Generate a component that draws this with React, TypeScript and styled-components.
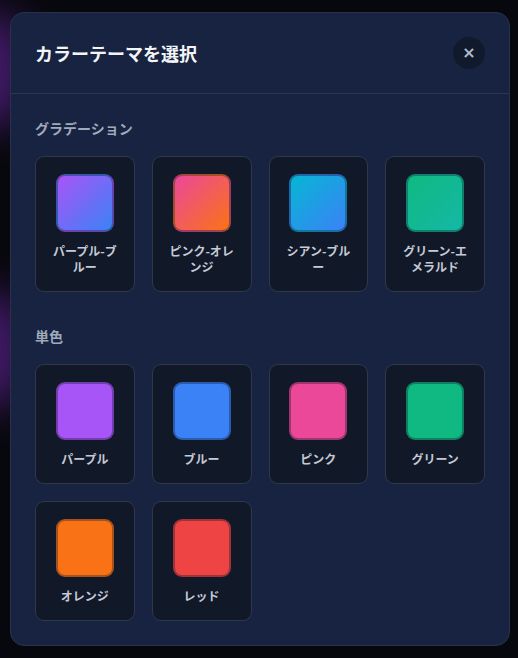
import React from 'react'
import styled, { createGlobalStyle } from 'styled-components'

const GlobalStyle = createGlobalStyle`
  html, body {
    margin: 0;
    padding: 0;
    background: #07080d;
    font-family: 'Noto Sans CJK JP', 'Noto Sans', sans-serif;
  }
`

interface Theme {
  name: string
  fill: string
}

const gradients: Theme[] = [
  { name: 'パープル-ブルー', fill: 'linear-gradient(135deg, #a855f7, #3b82f6)' },
  { name: 'ピンク-オレンジ', fill: 'linear-gradient(135deg, #ec4899, #f97316)' },
  { name: 'シアン-ブルー', fill: 'linear-gradient(135deg, #06b6d4, #3b82f6)' },
  { name: 'グリーン-エメラルド', fill: 'linear-gradient(135deg, #10b981, #14b8a6)' },
]

const solids: Theme[] = [
  { name: 'パープル', fill: '#a855f7' },
  { name: 'ブルー', fill: '#3b82f6' },
  { name: 'ピンク', fill: '#ec4899' },
  { name: 'グリーン', fill: '#10b981' },
  { name: 'オレンジ', fill: '#f97316' },
  { name: 'レッド', fill: '#ef4444' },
]

const ThemeGrid: React.FC<{ items: Theme[] }> = ({ items }) => (
  <Grid>
    {items.map((t) => (
      <Card key={t.name} type='button'>
        <Swatch $fill={t.fill} />
        <Label>{t.name}</Label>
      </Card>
    ))}
  </Grid>
)

const App: React.FC = () => {
  return (
    <Page>
      <GlobalStyle />
      <Glow $top={10} />
      <Glow $top={290} />
      <Modal>
        <Header>
          <Title>カラーテーマを選択</Title>
          <CloseButton type='button' aria-label='閉じる'>
            ×
          </CloseButton>
        </Header>
        <Body>
          <Section>
            <SectionTitle>グラデーション</SectionTitle>
            <ThemeGrid items={gradients} />
          </Section>
          <Section>
            <SectionTitle>単色</SectionTitle>
            <ThemeGrid items={solids} />
          </Section>
        </Body>
      </Modal>
    </Page>
  )
}

const Page = styled.div`
  position: relative;
  width: 518px;
  height: 658px;
  overflow: hidden;
  padding: 12px 0 0 10px;
  box-sizing: border-box;
  background: #07080d;
`

const Glow = styled.div<{ $top: number }>`
  position: absolute;
  left: -50px;
  top: ${(p) => p.$top}px;
  width: 80px;
  height: 120px;
  border-radius: 50%;
  background: #7a2bbf;
  opacity: 0.5;
  filter: blur(20px);
`

const Modal = styled.div`
  position: relative;
  width: 500px;
  box-sizing: border-box;
  background: #172341;
  border: 1px solid #28324c;
  border-radius: 14px;
`

const Header = styled.div`
  display: flex;
  align-items: center;
  justify-content: space-between;
  padding: 24px;
  border-bottom: 1px solid #2a3551;
`

const Title = styled.h2`
  margin: 0;
  font-size: 18px;
  line-height: 28px;
  font-weight: 700;
  color: #f3f4f6;
`

const CloseButton = styled.button`
  width: 32px;
  height: 32px;
  border: none;
  border-radius: 50%;
  background: #111a2c;
  color: #b4bccb;
  font-size: 16px;
  font-weight: 700;
  line-height: 32px;
  padding: 0;
  font-family: 'DejaVu Sans', sans-serif;
  cursor: pointer;
`

const Body = styled.div`
  padding: 24px 24px 24px 24px;
  display: flex;
  flex-direction: column;
  gap: 34px;
`

const Section = styled.section`
  display: flex;
  flex-direction: column;
  gap: 18px;
`

const SectionTitle = styled.h3`
  margin: 0;
  font-size: 14px;
  line-height: 20px;
  font-weight: 700;
  color: #a0aabb;
`

const Grid = styled.div`
  display: grid;
  grid-template-columns: repeat(4, 1fr);
  column-gap: 17px;
  row-gap: 17px;
`

const Card = styled.button`
  display: flex;
  flex-direction: column;
  align-items: center;
  padding: 17px 16px 16px;
  background: #111827;
  border: 1px solid #2e384b;
  border-radius: 9px;
  font-family: inherit;
  cursor: pointer;
`

const Swatch = styled.div<{ $fill: string }>`
  width: 58px;
  height: 58px;
  box-sizing: border-box;
  border-radius: 9px;
  background: ${(p) => p.$fill};
  border: 2px solid rgba(15, 20, 40, 0.35);
`

const Label = styled.span`
  margin-top: 11px;
  font-size: 12px;
  line-height: 16px;
  font-weight: 700;
  color: #c4cad6;
  text-align: center;
`

export default App
